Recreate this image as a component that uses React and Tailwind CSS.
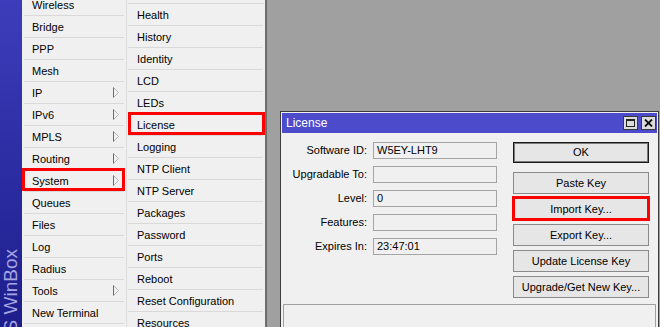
const menu1 = [
  { label: "Wireless" },
  { label: "Bridge" },
  { label: "PPP" },
  { label: "Mesh" },
  { label: "IP", sub: true },
  { label: "IPv6", sub: true },
  { label: "MPLS", sub: true },
  { label: "Routing", sub: true },
  { label: "System", sub: true, mark: true },
  { label: "Queues" },
  { label: "Files" },
  { label: "Log" },
  { label: "Radius" },
  { label: "Tools", sub: true },
  { label: "New Terminal" },
];

const menu2 = [
  "Health",
  "History",
  "Identity",
  "LCD",
  "LEDs",
  "License",
  "Logging",
  "NTP Client",
  "NTP Server",
  "Packages",
  "Password",
  "Ports",
  "Reboot",
  "Reset Configuration",
  "Resources",
];

const fields = [
  { label: "Software ID:", value: "W5EY-LHT9" },
  { label: "Upgradable To:", value: "" },
  { label: "Level:", value: "0" },
  { label: "Features:", value: "" },
  { label: "Expires In:", value: "23:47:01" },
];

const buttons = ["Paste Key", "Import Key...", "Export Key...", "Update License Key", "Upgrade/Get New Key..."];

function SubArrow() {
  return (
    <svg width="6" height="11" viewBox="0 0 6 11" className="absolute right-[5px] top-[5px]">
      <path d="M0.5 0.5 L5.5 5.5 L0.5 10.5" fill="none" stroke="#b4b4b4" strokeWidth="1" />
      <path d="M0.5 0.5 L0.5 10.5" fill="none" stroke="#6b6b6b" strokeWidth="1" />
    </svg>
  );
}

function RedMark({ className }) {
  return <div className={`absolute border-[3px] border-[#ff0000] pointer-events-none ${className}`} />;
}

export default function App() {
  return (
    <div
      className="flex w-[660px] h-[327px] overflow-hidden text-[11px] text-black bg-[#a0a0a0]"
      style={{ fontFamily: '"Liberation Sans", Arial, sans-serif' }}
    >
      {/* blue WinBox strip */}
      <div className="w-[22px] h-full flex flex-col items-center overflow-hidden bg-gradient-to-b from-[#3d3dbb] to-[#1d1d8c]">
        <div className="mt-[249px] shrink-0 [writing-mode:vertical-rl] rotate-180 text-[19px] leading-[22px] whitespace-nowrap text-[#a6a6e2]">
          RouterOS WinBox
        </div>
      </div>

      {/* main menu */}
      <div className="w-[105px] h-full bg-[#f0f0f0] border-r border-[#dcdcdc] overflow-hidden">
        <div className="mt-[-6px]">
          {menu1.map((item) => (
            <div
              key={item.label}
              className="relative mx-[2px] h-[22px] border-b border-[#d9d9d9] pl-[8px] pt-[1px] flex items-center"
            >
              <span>{item.label}</span>
              {item.sub && <SubArrow />}
              {item.mark && <RedMark className="-left-[2px] -right-[1px] -top-[2px] bottom-0" />}
            </div>
          ))}
        </div>
      </div>

      {/* system submenu */}
      <div className="w-[140px] h-full bg-[#f0f0f0] border-r-2 border-[#6e6e6e] overflow-hidden">
        <div className="mx-[1px] h-[4px] border-b border-[#d9d9d9]" />
        {menu2.map((label) => (
          <div
            key={label}
            className="relative mx-[1px] mr-[2px] h-[22px] border-b border-[#d9d9d9] pl-[9px] pt-[1px] flex items-center"
          >
            <span>{label}</span>
            {label === "License" && <RedMark className="left-0 -right-[2px] -top-[2px] bottom-0" />}
          </div>
        ))}
      </div>

      {/* workspace */}
      <div className="flex-1 h-full pl-[13px] pt-[111px]">
        <div className="w-[379px] h-[230px] border border-[#3c3c3c] bg-[#f0f0f0] p-[1px]">
          <div className="h-[20px] bg-[#4b4bcb] flex items-center justify-between pl-[4px] pr-[1px]">
            <span className="text-white text-[12px]">License</span>
            <div className="flex gap-[3px]">
              <div className="w-[15px] h-[14px] bg-[#dcdcdc] border border-[#3a3a3a] flex items-center justify-center">
                <div className="w-[9px] h-[8px] border border-[#222] border-t-2" />
              </div>
              <div className="w-[15px] h-[14px] bg-[#dcdcdc] border border-[#3a3a3a] flex items-center justify-center">
                <svg width="9" height="8" viewBox="0 0 9 8">
                  <path d="M1 0.5 L8 7.5 M8 0.5 L1 7.5" stroke="#111" strokeWidth="1.8" />
                </svg>
              </div>
            </div>
          </div>

          <div className="flex pt-[9px]">
            <div className="flex flex-col gap-[7px]">
              {fields.map((f) => (
                <div key={f.label} className="flex items-center">
                  <div className="w-[85px] text-right">{f.label}</div>
                  <div className="ml-[6px] w-[124px] h-[17px] border border-[#a5a5a5] bg-[#f0f0f0] pl-[3px] flex items-center leading-none">
                    {f.value}
                  </div>
                </div>
              ))}
            </div>

            <div className="ml-[16px] w-[136px] flex flex-col">
              <div className="h-[21px] border border-[#1a1a1a] shadow-[inset_0_0_0_1px_#7a7a7a] bg-[#e6e6e6] flex items-center justify-center">
                OK
              </div>
              <div className="mt-[9px] flex flex-col gap-[4px]">
                {buttons.map((b) => (
                  <div
                    key={b}
                    className="relative h-[22px] border border-[#8a8a8a] bg-[#e6e6e6] flex items-center justify-center"
                  >
                    {b}
                    {b === "Import Key..." && <RedMark className="-left-[2px] -right-[2px] -top-[3px] -bottom-[2px]" />}
                  </div>
                ))}
              </div>
            </div>
          </div>

          <div className="mt-[6px] ml-[1px] mr-[1px] h-[24px] border border-[#a0a0a0] bg-[#f0f0f0]" />
        </div>
      </div>
    </div>
  );
}
